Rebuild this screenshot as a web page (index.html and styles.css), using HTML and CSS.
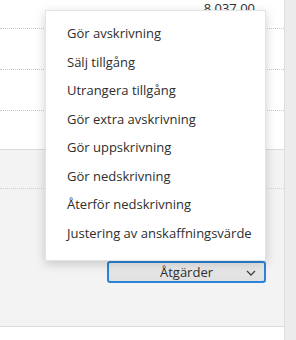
FILE: index.html
```html
<!DOCTYPE html>
<html lang="sv">
<head>
<meta charset="utf-8">
<link rel="stylesheet" href="styles.css">
</head>
<body>
<div class="page">
  <div class="main">
    <div class="table">
      <div class="row row-first"><span class="amount">8 037,00</span></div>
      <div class="row"></div>
      <div class="row"></div>
      <div class="row row-last"></div>
    </div>
    <div class="panel">
      <div class="panel-line"></div>
      <div class="panel-actions">
        <button class="select" type="button">
          <span class="select-label">Åtgärder</span>
          <svg class="chevron" width="10" height="6" viewBox="0 0 10 6"><polyline points="1,1 5,5 9,1" fill="none" stroke="#444" stroke-width="1.3"/></svg>
        </button>
      </div>
    </div>
    <div class="footer"></div>
    <ul class="menu">
      <li>Gör avskrivning</li>
      <li>Sälj tillgång</li>
      <li>Utrangera tillgång</li>
      <li>Gör extra avskrivning</li>
      <li>Gör uppskrivning</li>
      <li>Gör nedskrivning</li>
      <li>Återför nedskrivning</li>
      <li>Justering av anskaffningsvärde</li>
    </ul>
  </div>
  <div class="scrollbar"></div>
</div>
</body>
</html>
```

FILE: styles.css
```css
html, body {
  margin: 0;
  padding: 0;
  background: #fff;
}
body {
  font-family: "Open Sans", "Noto Sans", sans-serif;
  font-size: 13px;
  color: #2e2e2e;
}
.page {
  display: flex;
  height: 340px;
  overflow: hidden;
}
.main {
  position: relative;
  flex: 1;
  display: flex;
  flex-direction: column;
}
.scrollbar {
  width: 11px;
  background: #ececec;
  border-left: 1px solid #dedede;
}
.table {
  background: #fff;
}
.row {
  height: 40px;
  border-bottom: 1px dotted #c8c8c8;
}
.row-first {
  height: 28px;
  position: relative;
}
.row-last {
  height: 38px;
  border-bottom: 1px solid #dcdcdc;
}
.amount {
  position: absolute;
  right: 29px;
  top: -1px;
  line-height: 18px;
}
.panel {
  background: #f3f3f3;
  height: 176px;
  border-bottom: 1px solid #dcdcdc;
  display: flex;
  flex-direction: column;
}
.panel-line {
  height: 38px;
  border-bottom: 1px dotted #d0d0d0;
}
.panel-actions {
  display: flex;
  justify-content: flex-end;
  padding: 72px 18px 0 0;
}
.select {
  position: relative;
  width: 159px;
  height: 22px;
  border: 2px solid #2b84d8;
  border-radius: 3px;
  background: linear-gradient(#ececec, #e0e0e0);
  font: inherit;
  color: #2e2e2e;
  padding: 0;
  display: flex;
  align-items: center;
  justify-content: center;
}
.select-label {
  line-height: 18px;
}
.chevron {
  position: absolute;
  right: 8px;
  top: 7px;
}
.footer {
  flex: 1;
  background: #fff;
}
.menu {
  position: absolute;
  left: 45px;
  top: 10px;
  width: 221px;
  margin: 0;
  padding: 8px 0 13px;
  list-style: none;
  background: #fff;
  border: 1px solid #e4e4e4;
  box-sizing: border-box;
  box-shadow: 0 3px 10px rgba(0, 0, 0, 0.18);
}
.menu li {
  height: 28.5px;
  display: flex;
  align-items: center;
  padding-left: 21px;
  white-space: nowrap;
}
```
